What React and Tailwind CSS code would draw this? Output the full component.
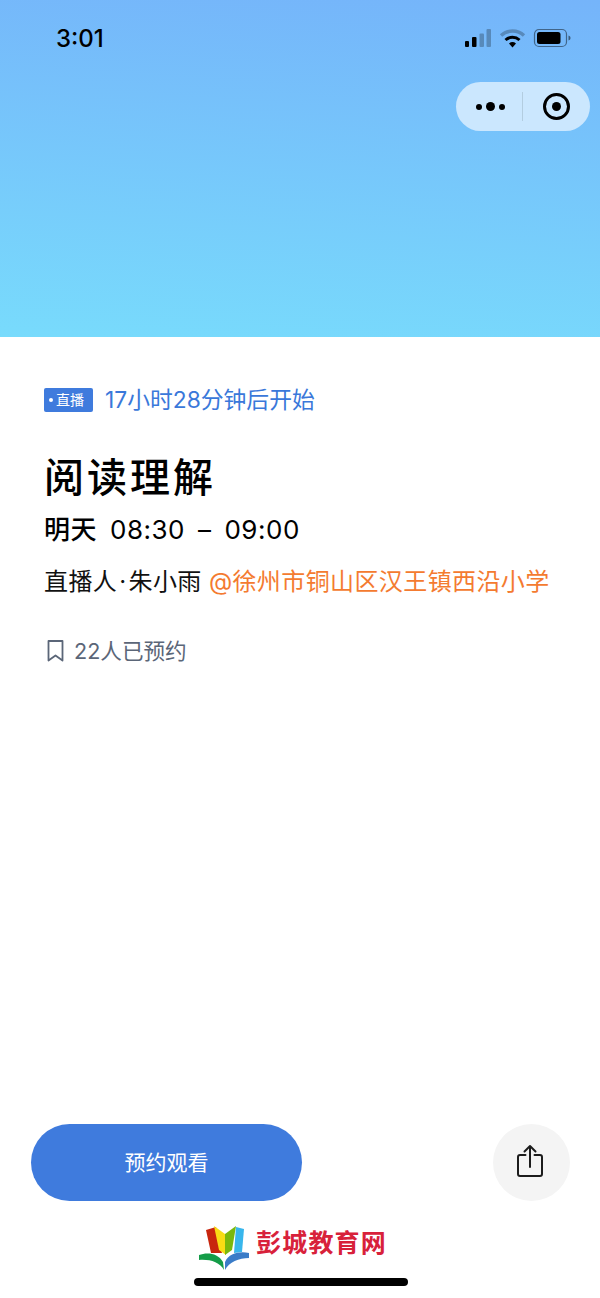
const CJK = { fontFamily: '"Inter","Noto Sans CJK SC",sans-serif' };

function StatusIcons() {
  return (
    <svg width="108" height="22" viewBox="0 0 108 22" className="block">
      <g fill="#000">
        <rect x="1" y="13" width="4" height="6" rx="1" />
        <rect x="8" y="9" width="4.5" height="10" rx="1" />
      </g>
      <g fill="#000" opacity="0.25">
        <rect x="15.5" y="5.5" width="4.5" height="13.5" rx="1" />
        <rect x="22.5" y="1" width="4.5" height="18" rx="1" />
      </g>
      <path d="M37 7.5a17 17 0 0 1 23 0" fill="none" stroke="#000" strokeOpacity="0.25" strokeWidth="3.4" />
      <path d="M41.5 12a10.5 10.5 0 0 1 14 0" fill="none" stroke="#000" strokeWidth="3" />
      <path d="M45 15.6a5.4 5.4 0 0 1 7 0L48.5 19.6z" fill="#000" />
      <rect x="70.5" y="1.5" width="32" height="17" rx="4.5" fill="none" stroke="#000" strokeOpacity="0.45" strokeWidth="1.2" />
      <rect x="73" y="4" width="23.5" height="12" rx="2.5" fill="#000" />
      <path d="M104.5 7.5c1.5.4 2 1.4 2 2.5s-.5 2.100-2 2.500z" fill="#000" fillOpacity="0.5" />
    </svg>
  );
}

function Capsule() {
  return (
    <div className="flex h-[49px] w-[134px] items-center rounded-full bg-[#cbe7fe]">
      <div className="flex flex-1 items-center justify-center gap-[4px] pl-[2px]">
        <span className="size-[6px] rounded-full bg-black" />
        <span className="size-[9px] rounded-full bg-black" />
        <span className="size-[6px] rounded-full bg-black" />
      </div>
      <span className="h-[29px] w-px bg-[#b3cde0]" />
      <div className="flex w-[67px] items-center justify-center">
        <span className="flex size-[27px] items-center justify-center rounded-full border-[3px] border-black">
          <span className="size-[9px] rounded-full bg-black" />
        </span>
      </div>
    </div>
  );
}

function BookmarkIcon() {
  return (
    <svg width="17" height="22" viewBox="0 0 17 22" fill="none" stroke="#5b6678" strokeWidth="1.8" strokeLinejoin="round">
      <path d="M1.500 1h14v19.500l-7-5-7 5z" />
    </svg>
  );
}

function ShareIcon() {
  return (
    <svg width="26" height="34" viewBox="0 0 26 34" fill="none" stroke="#1c1c1c" strokeWidth="2" strokeLinecap="round" strokeLinejoin="round">
      <path d="M8.500 11H3a2 2 0 0 0-2 2v17a2 2 0 0 0 2 2h20a2 2 0 0 0 2-2V13a2 2 0 0 0-2-2h-5.500" />
      <path d="M13 23V2M7.500 7.500 13 2l5.500 5.500" />
    </svg>
  );
}

function LogoMark() {
  return (
    <svg width="52" height="46" viewBox="0 0 52 46">
      <path d="M7 6 17 3l6 26-11 0z" fill="#c8260e" />
      <path d="M15 2l11 8 1 21-7-5z" fill="#f8dc14" />
      <path d="M37 2 26 10l0 21 7-5z" fill="#7ab80c" />
      <path d="M37 3l8 2-2 23-8 1z" fill="#38b6ec" />
      <path d="M0 31c8-3 19-2 24 7l1 8C21 38 10 35 0 36z" fill="#149c48" />
      <path d="M50 29c-9-2-20 0-24 9l0 8c4-8 14-12 24-12z" fill="#3a7cc8" />
    </svg>
  );
}

export default function App() {
  return (
    <div className="flex min-h-[1298px] w-[600px] flex-col bg-white" style={CJK}>
      <header className="h-[337px] bg-[linear-gradient(184deg,#75b4fa,#78dbfc)] pr-[28px]">
        <div className="flex items-center justify-between pl-[56px] pt-[25px]">
          <span className="text-[24px] leading-[28px] font-medium text-black">3:01</span>
          <StatusIcons />
        </div>
        <div className="mt-[29px] -mr-[18px] flex justify-end">
          <Capsule />
        </div>
      </header>

      <main className="px-[44px] pt-[51px]">
        <div className="flex items-center gap-[12px]">
          <span className="flex h-[24px] w-[49px] items-center gap-[3px] rounded-[2px] bg-[#3f7bdd] pl-[5px] text-[14px] leading-none text-white">
            <span className="size-[4px] rounded-full bg-white" />
            直播
          </span>
          <span className="text-[22.800px] leading-[24px] text-[#3a78da]">17小时28分钟后开始</span>
        </div>

        <h1 className="mt-[41px] text-[40px] leading-[50px] font-medium tracking-[3px] text-black">阅读理解</h1>

        <p className="mt-[9px] text-[26px] leading-[36px] font-medium tracking-[0.5px] text-black">
          明天<span className="ml-[13px] font-normal">08:30</span>
          <span className="ml-[13px] font-normal">–</span>
          <span className="ml-[13px] font-normal">09:00</span>
        </p>

        <p className="mt-[17px] text-[24px] leading-[34px] whitespace-nowrap tracking-[0.4px] text-[#111]">
          直播人<span className="mx-[2px]">·</span>朱小雨 <span className="text-[#f47b30]">@徐州市铜山区汉王镇西沿小学</span>
        </p>

        <div className="mt-[36px] flex items-center gap-[10px] pl-[3px] text-[21.6px] leading-[32px] text-[#5b6678]">
          <BookmarkIcon />
          <span>22人已预约</span>
        </div>
      </main>

      <footer className="mt-auto">
        <div className="flex items-center justify-between pl-[31px] pr-[30px]">
          <button className="h-[77px] w-[271px] rounded-full bg-[#3f7bdd] text-[21px] text-white">预约观看</button>
          <span className="flex size-[77px] items-center justify-center rounded-full bg-[#f4f4f4] pr-[3px] pb-[4px]">
            <ShareIcon />
          </span>
        </div>
        <div className="mt-[23px] flex h-[46px] items-center justify-center gap-[5px] pr-[14px]">
          <LogoMark />
          <span className="pb-[7px] text-[25px] leading-none font-bold tracking-[1.2px] text-[#d8213a]">彭城教育网</span>
        </div>
        <div className="flex justify-center pt-[8px] pb-[12px]">
          <span className="ml-[2px] h-[8px] w-[214px] rounded-full bg-black" />
        </div>
      </footer>
    </div>
  );
}
